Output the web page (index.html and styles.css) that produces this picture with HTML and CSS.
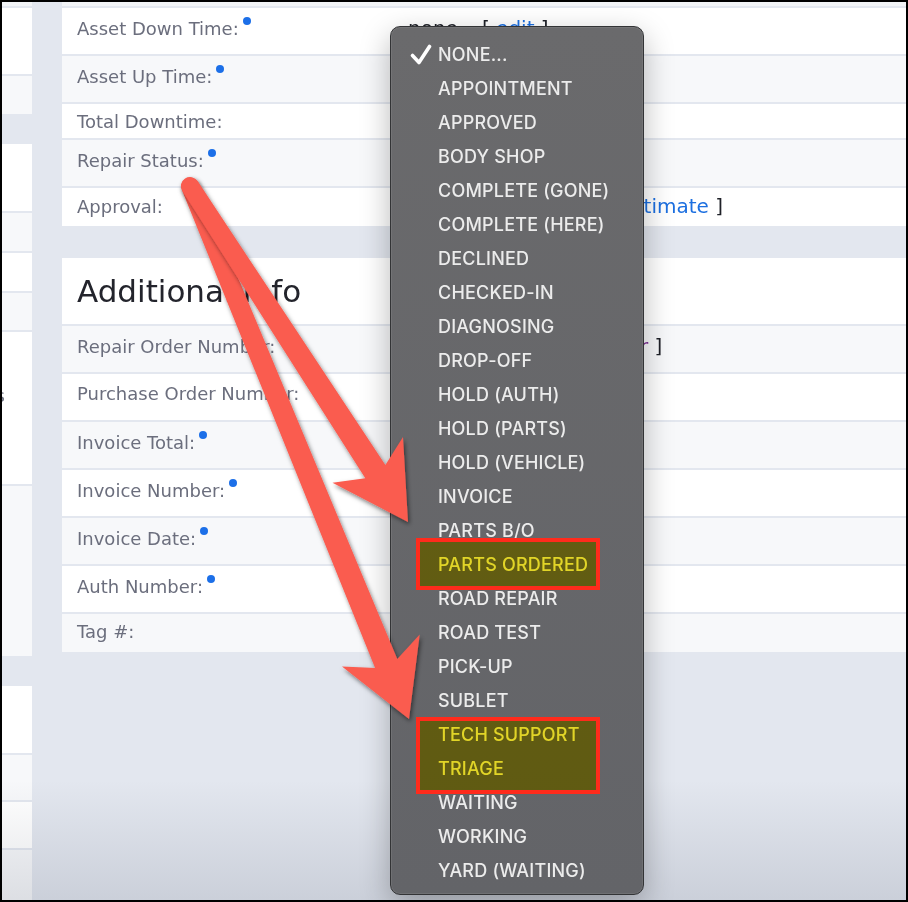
FILE: index.html
```html
<!DOCTYPE html>
<html>
  <head>
    <meta charset="UTF-8" />
    <meta name="viewport" content="width=device-width, initial-scale=1.0" />
    <title>Repair Details</title>
    <link rel="stylesheet" href="styles.css">
  </head>

  <body>
    <div class="frame">
      <aside class="side">
        <div class="stub"></div>
        <div class="side-group">
          <div class="block h66"></div>
          <div class="block alt h38"></div>
        </div>
        <div class="side-group">
          <div class="block h67"></div>
          <div class="block alt h38"></div>
          <div class="block h38"></div>
          <div class="block alt h37"></div>
          <div class="block h152"><span class="side-note">Parts</span></div>
          <div class="block alt h170"></div>
        </div>
        <div class="side-group last">
          <div class="block h67"></div>
          <div class="block alt h45"></div>
          <div class="block h46"></div>
          <div class="block alt fill"></div>
        </div>
      </aside>

      <main class="main">
        <div class="stub"></div>

        <section class="card">
          <div class="row tall">
            <span class="label">Asset Down Time:<i class="dot"></i></span>
            <span class="value">none<span class="actions">[ <a href="#">edit</a> ]</span></span>
          </div>
          <div class="row tall alt">
            <span class="label">Asset Up Time:<i class="dot"></i></span>
          </div>
          <div class="row short">
            <span class="label">Total Downtime:</span>
          </div>
          <div class="row tall alt">
            <span class="label">Repair Status:<i class="dot"></i></span>
          </div>
          <div class="row mid">
            <span class="label">Approval:</span>
            <span class="value">none<span class="actions">[ <a href="#">edit</a> ]</span><span class="actions next">[ <a href="#">add estimate</a> ]</span></span>
          </div>
        </section>

        <section class="card spaced">
          <h2 class="card-title">Additional Info</h2>
          <div class="row tall alt">
            <span class="label">Repair Order Number:</span>
            <span class="value">none<span class="actions">[ <a class="visited" href="#">add work order</a> ]</span></span>
          </div>
          <div class="row tall">
            <span class="label">Purchase Order Number:</span>
          </div>
          <div class="row tall alt">
            <span class="label">Invoice Total:<i class="dot"></i></span>
          </div>
          <div class="row tall">
            <span class="label">Invoice Number:<i class="dot"></i></span>
          </div>
          <div class="row tall alt">
            <span class="label">Invoice Date:<i class="dot"></i></span>
          </div>
          <div class="row tall">
            <span class="label">Auth Number:<i class="dot"></i></span>
          </div>
          <div class="row mid alt">
            <span class="label">Tag #:</span>
          </div>
        </section>
      </main>

      <div class="haze"></div>

      <!-- repair status picker, open -->
      <ul class="menu">
        <li class="option"><span class="check"><svg width="22" height="22" viewBox="0 0 22 22"><polyline points="2.5,12.5 9,19.5 19.5,3.5" fill="none" stroke="#fff" stroke-width="3.6" stroke-linecap="round" stroke-linejoin="round"/></svg></span>NONE...</li>
        <li class="option"><span class="check"></span>APPOINTMENT</li>
        <li class="option"><span class="check"></span>APPROVED</li>
        <li class="option"><span class="check"></span>BODY SHOP</li>
        <li class="option"><span class="check"></span>COMPLETE (GONE)</li>
        <li class="option"><span class="check"></span>COMPLETE (HERE)</li>
        <li class="option"><span class="check"></span>DECLINED</li>
        <li class="option"><span class="check"></span>CHECKED-IN</li>
        <li class="option"><span class="check"></span>DIAGNOSING</li>
        <li class="option"><span class="check"></span>DROP-OFF</li>
        <li class="option"><span class="check"></span>HOLD (AUTH)</li>
        <li class="option"><span class="check"></span>HOLD (PARTS)</li>
        <li class="option"><span class="check"></span>HOLD (VEHICLE)</li>
        <li class="option"><span class="check"></span>INVOICE</li>
        <li class="option"><span class="check"></span>PARTS B/O</li>
        <li class="option"><span class="check"></span>PARTS ORDERED</li>
        <li class="option"><span class="check"></span>ROAD REPAIR</li>
        <li class="option"><span class="check"></span>ROAD TEST</li>
        <li class="option"><span class="check"></span>PICK-UP</li>
        <li class="option"><span class="check"></span>SUBLET</li>
        <li class="option"><span class="check"></span>TECH SUPPORT</li>
        <li class="option"><span class="check"></span>TRIAGE</li>
        <li class="option"><span class="check"></span>WAITING</li>
        <li class="option"><span class="check"></span>WORKING</li>
        <li class="option"><span class="check"></span>YARD (WAITING)</li>
      </ul>

      <!-- highlighter marks -->
      <div class="mark mark-parts"></div>
      <div class="mark mark-tech"></div>

      <svg class="arrows" width="904" height="898" viewBox="2 2 904 898">
        <defs>
          <filter id="arrow-shadow" x="-20%" y="-20%" width="140%" height="140%">
            <feDropShadow dx="1.5" dy="2.5" stdDeviation="2" flood-color="#000" flood-opacity="0.5" />
          </filter>
        </defs>
        <path filter="url(#arrow-shadow)" d="M 409 719 L 419.7 634.6 L 397.3 658.9 L 198.3 182.6 A 9 9 0 0 0 181.7 189.4 L 375.1 668.1 L 342 666.5 Z" />
        <path filter="url(#arrow-shadow)" d="M 408 522 L 403 437 L 385.4 465.1 L 197.6 181.1 A 9 9 0 0 0 182.4 190.9 L 365.3 478.2 L 332.5 482.8 Z" />
      </svg>
    </div>
  </body>
</html>
```

FILE: styles.css
```css
* {
  box-sizing: border-box;
}

html,
body {
  margin: 0;
  background-color: #000;
}

body {
  font-family: "DejaVu Sans", Verdana, sans-serif;
}

.frame {
  position: relative;
  display: flex;
  width: 908px;
  height: 902px;
  border: 2px solid #000;
  background-color: #e3e7ef;
  overflow: hidden;
}

.stub {
  flex: none;
  height: 4px;
  margin-bottom: 2px;
  background-color: #f2f4f7;
}

/* left column, cut off by the window */
.side {
  flex: none;
  width: 30px;
  display: flex;
  flex-direction: column;
}

.side-group {
  display: flex;
  flex-direction: column;
  gap: 2px;
}

.side-group + .side-group {
  margin-top: 30px;
}

.side-group.last {
  flex: 1;
}

.block {
  background-color: #fff;
}

.block.alt {
  background-color: #f7f8fa;
}

.h37 { height: 37px; }
.h38 { height: 38px; }
.h45 { height: 45px; }
.h46 { height: 46px; }
.h66 { height: 66px; }
.h67 { height: 67px; }
.h152 { height: 152px; }
.h170 { height: 170px; }

.block.fill {
  flex: 1;
}

.side-note {
  display: block;
  margin: 53px 0 0 -42px;
  font-size: 18px;
  color: #6b6e7d;
  white-space: nowrap;
}

/* main details panel */
.main {
  flex: 1;
  margin-left: 30px;
  display: flex;
  flex-direction: column;
}

.card {
  display: flex;
  flex-direction: column;
  gap: 2px;
}

.card.spaced {
  margin-top: 32px;
}

.card-title {
  margin: 0;
  height: 66px;
  padding: 15px 15px 0;
  background-color: #fff;
  font-size: 31px;
  font-weight: normal;
  line-height: 36px;
  color: #23242c;
}

.row {
  display: flex;
  align-items: baseline;
  padding: 9px 0 0 15px;
  background-color: #fff;
  font-size: 18px;
  line-height: 22px;
  white-space: nowrap;
}

.row.alt {
  background-color: #f7f8fa;
}

.row.tall {
  height: 46px;
}

.row.mid {
  height: 38px;
  padding-top: 7px;
}

.row.short {
  height: 34px;
  padding-top: 7px;
}

.label {
  flex: none;
  width: 331px;
  color: #6b6e7d;
}

.dot {
  display: inline-block;
  width: 8px;
  height: 8px;
  margin-left: 4px;
  border-radius: 50%;
  background-color: #1c6fe8;
  vertical-align: 10px;
}

.value {
  font-size: 20px;
  color: #1f2128;
}

.actions {
  margin-left: 24px;
}

.actions.next {
  margin-left: 14px;
}

.value a {
  color: #1c6fe0;
  text-decoration: none;
}

.value a.visited {
  color: #7a2a92;
}

.haze {
  position: absolute;
  left: 0;
  right: 0;
  bottom: 0;
  height: 120px;
  background: linear-gradient(rgba(30, 40, 65, 0), rgba(30, 40, 65, 0.12));
  pointer-events: none;
}

/* dark select popup */
.menu {
  position: absolute;
  left: 388px;
  top: 24px;
  width: 254px;
  height: 869px;
  margin: 0;
  padding: 10px 0 0;
  list-style: none;
  border: 1px solid #333436;
  border-radius: 10px;
  background: linear-gradient(#6a6a6c, #636468);
  box-shadow: 0 10px 30px rgba(0, 0, 0, 0.28), inset 0 0 0 1px rgba(255, 255, 255, 0.08);
  font-family: Inter, "Liberation Sans", sans-serif;
  font-size: 18px;
  font-weight: 500;
  letter-spacing: 0.2px;
  color: #ececec;
}

.option {
  display: flex;
  align-items: center;
  height: 34px;
  padding-left: 20px;
  white-space: nowrap;
}

.check {
  flex: none;
  display: flex;
  width: 28px;
  margin-left: -1px;
}

/* yellow highlighter with red outline */
.mark {
  position: absolute;
  left: 414px;
  width: 184px;
  border: 4px solid #ff2b1c;
}

.mark::before {
  content: "";
  position: absolute;
  inset: 0;
  background-color: #f4e62a;
  mix-blend-mode: multiply;
}

.mark-parts {
  top: 536px;
  height: 52px;
}

.mark-tech {
  top: 715px;
  height: 77px;
}

.arrows {
  position: absolute;
  left: 0;
  top: 0;
  pointer-events: none;
}

.arrows path {
  fill: #fa5b4f;
}
```
